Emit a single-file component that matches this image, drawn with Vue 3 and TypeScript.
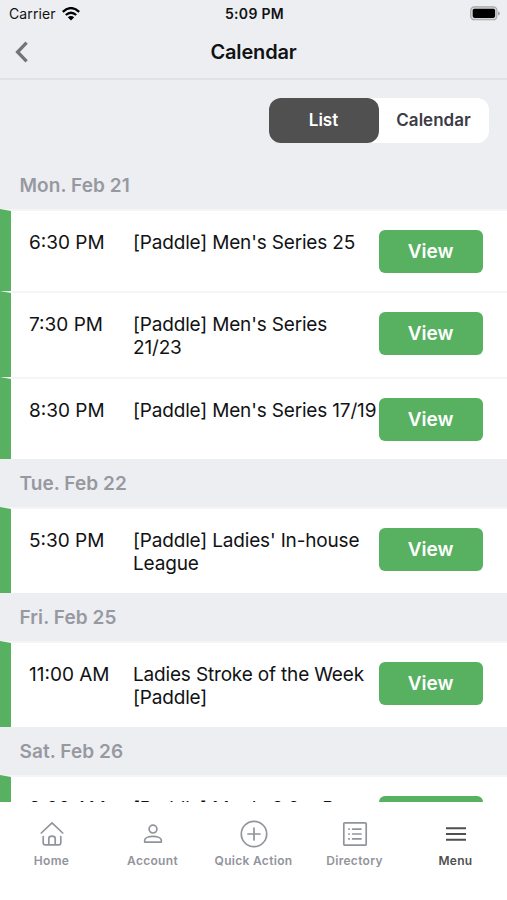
<script setup lang="ts">
interface CalendarEvent {
  time: string
  title: string
}

interface Day {
  label: string
  events: CalendarEvent[]
}

const days: Day[] = [
  {
    label: 'Mon. Feb 21',
    events: [
      { time: '6:30 PM', title: "[Paddle] Men's Series 25" },
      { time: '7:30 PM', title: "[Paddle] Men's Series\n21/23" },
      { time: '8:30 PM', title: "[Paddle] Men's Series 17/19" },
    ],
  },
  { label: 'Tue. Feb 22', events: [{ time: '5:30 PM', title: "[Paddle] Ladies' In-house\nLeague" }] },
  { label: 'Fri. Feb 25', events: [{ time: '11:00 AM', title: 'Ladies Stroke of the Week\n[Paddle]' }] },
  { label: 'Sat. Feb 26', events: [{ time: '9:00 AM', title: "[Paddle] Men's 3.0 + Pro" }] },
]

const tabs: string[] = ['Home', 'Account', 'Quick Action', 'Directory', 'Menu']
</script>

<template>
  <div class="screen">
    <header class="top">
      <div class="status">
        <span class="carrier">Carrier
          <svg width="18" height="14" viewBox="0 0 18 14">
            <g fill="none" stroke="#000" stroke-width="2.3">
              <path d="M0.8 4.8Q9 -2.6 17.2 4.8" />
              <path d="M3.8 8Q9 3.4 14.2 8" />
            </g>
            <path d="M9 13.4L5.8 10.2Q9 7.6 12.2 10.2Z" />
          </svg>
        </span>
        <span class="clock">5:09 PM</span>
        <span class="battery">
          <svg width="30" height="15" viewBox="0 0 30 15">
            <rect x="0.7" y="0.9" width="26.2" height="12.9" rx="3.6" fill="#d4d4d5" stroke="#a5a5a6" stroke-width="1.1" />
            <rect x="2.7" y="2.8" width="22.4" height="9.1" rx="1.8" />
            <path d="M28 5.2Q30 6 30 7.4T28 9.6Z" fill="#a5a5a6" />
          </svg>
        </span>
      </div>
      <div class="nav">
        <svg class="back" width="14" height="22" viewBox="0 0 14 22">
          <path d="M12.6 1.7L3.6 11L12.6 20.3" fill="none" stroke="#747476" stroke-width="3.3" />
        </svg>
        <h1>Calendar</h1>
      </div>
    </header>

    <main class="content">
      <div class="toolbar">
        <div class="segmented">
          <button class="segment active">List</button>
          <button class="segment">Calendar</button>
        </div>
      </div>
      <section v-for="day in days" :key="day.label">
        <h2>{{ day.label }}</h2>
        <article v-for="event in day.events" :key="event.time" class="event">
          <span class="time">{{ event.time }}</span>
          <span class="title">{{ event.title }}</span>
          <button class="view">View</button>
        </article>
      </section>
    </main>

    <nav class="tabbar">
      <a v-for="tab in tabs" :key="tab" class="tab" :class="{ current: tab === 'Menu' }">
        <svg width="28" height="28" viewBox="0 0 28 28" fill="none" stroke="currentColor" stroke-width="1.7" stroke-linecap="round" stroke-linejoin="round">
          <template v-if="tab === 'Home'">
            <path d="M3.3 13L14 2.9L24.7 13" />
            <path d="M5.2 16.6V22.7Q5.2 24.9 7.4 24.9H20.6Q22.8 24.9 22.8 22.7V16.6M10.8 24.5V18.6Q10.8 16.2 14 16.2T17.2 18.6V24.5" />
          </template>
          <template v-else-if="tab === 'Account'">
            <circle cx="14" cy="9.1" r="3.9" />
            <path d="M5.7 22.1V20.3C5.7 17.9 9.5 16.4 14 16.4S22.3 17.9 22.3 20.3V22.1Z" />
          </template>
          <template v-else-if="tab === 'Quick Action'">
            <circle cx="14" cy="14" r="12.7" />
            <path d="M14 8V20M8 14H20" />
          </template>
          <template v-else-if="tab === 'Directory'">
            <rect x="2.8" y="2.8" width="22.4" height="22.4" rx="1" />
            <path d="M11.6 9.1H20M11.6 14H20M11.6 18.9H20M7.8 9.1H8.2M7.8 14H8.2M7.8 18.9H8.2" />
          </template>
          <path v-else d="M4 8.2H24M4 14H24M4 19.8H24" stroke-width="2.1" stroke-linecap="butt" />
        </svg>
        <span>{{ tab }}</span>
      </a>
    </nav>
  </div>
</template>

<style>
body {
  margin: 0;
  overflow: hidden;
}
</style>

<style scoped>
.screen {
  display: flex;
  flex-direction: column;
  width: 507px;
  height: 900px;
  overflow: hidden;
  background: #edeef2;
  color: #111214;
  font-family: Inter, "Liberation Sans", sans-serif;
}

.top {
  flex: none;
  box-sizing: border-box;
  height: 80px;
  border-bottom: 2px solid #e0e1e5;
}

.status {
  display: grid;
  grid-template-columns: 1fr auto 1fr;
  align-items: center;
  height: 27px;
  padding: 0 7px 0 9px;
  font-size: 14px;
  line-height: 27px;
}

.carrier {
  display: flex;
  align-items: center;
  gap: 6px;
  letter-spacing: 0.1px;
}

.clock {
  font-weight: 600;
  letter-spacing: 0.3px;
}

.battery {
  display: flex;
  justify-content: flex-end;
}

.nav {
  display: grid;
  grid-template-columns: 60px 1fr 60px;
  align-items: center;
  height: 50px;
}

.back {
  margin-left: 14px;
}

h1 {
  margin: 0;
  font-size: 20px;
  font-weight: 600;
  text-align: center;
  letter-spacing: -0.15px;
}

.content {
  flex: 1;
  min-height: 0;
  overflow: hidden;
}

.toolbar {
  display: flex;
  justify-content: flex-end;
  box-sizing: border-box;
  height: 81px;
  padding: 17.5px 18.5px 0 0;
}

.segmented {
  display: flex;
  width: 220px;
  height: 45px;
  border-radius: 12px;
  background: #fff;
}

button {
  padding: 0;
  border: 0;
  font-family: inherit;
  font-weight: 600;
}

.segment {
  flex: 1;
  border-radius: 12px;
  background: transparent;
  color: #3b3c47;
  font-size: 17px;
}

.segment.active {
  background: #505050;
  color: #fff;
}

h2 {
  box-sizing: border-box;
  height: 48px;
  margin: 0;
  padding: 1px 0 0 19.5px;
  color: #9799a1;
  font-size: 19px;
  font-weight: 600;
  line-height: 48px;
  letter-spacing: 0.08px;
}

.event {
  display: grid;
  grid-template-columns: 104px 245.5px 104px;
  align-items: start;
  box-sizing: border-box;
  min-height: 82px;
  padding: 19px 0 18px 18px;
  border-top: 2px solid #f5f5f7;
  border-left: 11px solid #57b161;
  background: #fff;
  font-size: 19px;
  line-height: 23px;
}

.time,
.title {
  padding-top: 1px;
  white-space: pre;
}

.title {
  letter-spacing: -0.17px;
}

.view {
  height: 43px;
  border-radius: 6px;
  background: #57b161;
  color: #fff;
  font-size: 19px;
}

.tabbar {
  flex: none;
  display: grid;
  grid-template-columns: repeat(5, 101px);
  box-sizing: border-box;
  height: 98px;
  padding: 18px 1px 0;
  background: #fff;
}

.tab {
  display: flex;
  flex-direction: column;
  align-items: center;
  gap: 5px;
  color: #92949c;
  font-size: 12px;
  font-weight: 600;
  line-height: 16px;
  letter-spacing: 0.3px;
  white-space: nowrap;
}

.tab.current {
  color: #505050;
}
</style>
